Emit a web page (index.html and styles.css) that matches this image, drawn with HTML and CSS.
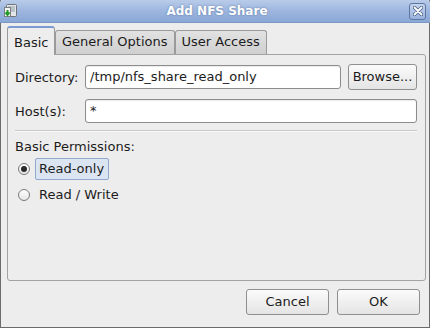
FILE: index.html
```html
<!DOCTYPE html>
<html lang="en">
<head>
    <meta charset="UTF-8">
    <title>Add NFS Share</title>
    <link rel="stylesheet" href="styles.css">
</head>
<body>
    <div class="window">
        <!-- Title bar -->
        <div class="titlebar">
            <svg class="app-icon" width="16" height="16" viewBox="0 0 16 16">
                <rect x="3.5" y="1.5" width="10" height="12" rx="1" fill="#e4e6e8" stroke="#6d7478"/>
                <rect x="5" y="3" width="7" height="6" fill="#b9c2c8"/>
                <rect x="1.5" y="4.5" width="6" height="9" fill="#f2f2f2" stroke="#7a7f83"/>
                <path d="M4.5 7 v4 M2.5 9.5 l2 2.5 l2 -2.5" stroke="#1f9a2a" stroke-width="2" fill="none"/>
            </svg>
            <div class="title">Add NFS Share</div>
            <div class="close-button">
                <svg width="10" height="10" viewBox="0 0 10 10">
                    <path d="M1.5 1.5 L8.5 8.5 M8.5 1.5 L1.5 8.5" stroke="#4a6286" stroke-width="3.4" stroke-linecap="round"/>
                    <path d="M1.5 1.5 L8.5 8.5 M8.5 1.5 L1.5 8.5" stroke="#ffffff" stroke-width="1.8" stroke-linecap="round"/>
                </svg>
            </div>
        </div>

        <div class="content">
            <!-- Tabs -->
            <div class="tabs">
                <div class="tab active">Basic</div>
                <div class="tab">General Options</div>
                <div class="tab">User Access</div>
            </div>

            <div class="panel">
                <div class="form-row">
                    <div class="label">Directory:</div>
                    <div class="input">/tmp/nfs_share_read_only</div>
                    <div class="button browse">Browse...</div>
                </div>
                <div class="form-row">
                    <div class="label">Host(s):</div>
                    <div class="input">*</div>
                </div>

                <div class="separator"></div>

                <div class="section-label">Basic Permissions:</div>
                <div class="radio-row">
                    <span class="radio checked"></span>
                    <span class="radio-text focused">Read-only</span>
                </div>
                <div class="radio-row">
                    <span class="radio"></span>
                    <span class="radio-text">Read / Write</span>
                </div>
            </div>

            <!-- Dialog buttons -->
            <div class="actions">
                <div class="button action">Cancel</div>
                <div class="button action">OK</div>
            </div>
        </div>
    </div>
</body>
</html>
```

FILE: styles.css
```css
* {
    box-sizing: border-box;
    margin: 0;
    padding: 0;
    font-family: 'DejaVu Sans', 'Liberation Sans', sans-serif;
}

body {
    background-color: #ffffff;
    width: 430px;
    height: 328px;
}

.window {
    width: 430px;
    height: 328px;
    background-color: #ededed;
    border-left: 1px solid #6b6b6b;
    border-right: 1px solid #6b6b6b;
    border-bottom: 1px solid #6b6b6b;
    display: flex;
    flex-direction: column;
}

.titlebar {
    height: 23px;
    background: linear-gradient(to bottom, #b9cbe8 0%, #9db6df 50%, #8aa7d6 100%);
    border-bottom: 1px solid #7b97c6;
    border-radius: 3px 3px 0 0;
    display: flex;
    align-items: center;
    padding: 0 4px 0 3px;
    margin: 0 -1px;
}

.app-icon {
    flex: 0 0 auto;
}

.title {
    flex: 1;
    text-align: center;
    font-size: 12px;
    font-weight: 700;
    color: #ffffff;
    text-shadow: 0 0 2px rgba(60, 85, 130, 0.7);
    padding-left: 6px;
}

.close-button {
    width: 17px;
    height: 17px;
    border: 1px solid #5d77a3;
    border-radius: 3px;
    background: linear-gradient(to bottom, #c6d5ee, #98b1dc);
    display: flex;
    justify-content: center;
    align-items: center;
}

.content {
    flex: 1;
    display: flex;
    flex-direction: column;
    padding: 3px 3px 0 6px;
}

.tabs {
    display: flex;
    align-items: flex-end;
    height: 29px;
    position: relative;
    z-index: 1;
    margin-bottom: -1px;
}

.tab {
    height: 24px;
    padding: 0 6px;
    font-size: 13px;
    color: #1c1c1c;
    line-height: 22px;
    border: 1px solid #9a9a9a;
    border-bottom: none;
    border-radius: 3px 3px 0 0;
    background: linear-gradient(to bottom, #e2e2e2, #cfcfcf);
    margin-bottom: 1px;
}

.tab.active {
    height: 29px;
    margin-bottom: 0;
    line-height: 30px;
    background: #ededed;
    border-top: 2px solid #7b9ad0;
    width: 48px;
}

.panel {
    height: 227px;
    border: 1px solid #a3a3a3;
    border-radius: 0 3px 3px 3px;
    padding: 9px 8px 0 7px;
    display: flex;
    flex-direction: column;
}

.form-row {
    display: flex;
    align-items: center;
    height: 26px;
    margin-bottom: 8px;
}

.label {
    width: 70px;
    font-size: 13px;
    color: #1c1c1c;
}

.input {
    flex: 1;
    height: 24px;
    background-color: #ffffff;
    border: 1px solid #8c8c8c;
    border-radius: 3px;
    box-shadow: inset 0 1px 1px rgba(0, 0, 0, 0.08);
    font-size: 13px;
    line-height: 22px;
    color: #1c1c1c;
    padding-left: 4px;
}

.button {
    height: 26px;
    border: 1px solid #8f8f8f;
    border-radius: 3px;
    background: linear-gradient(to bottom, #fbfbfb, #e4e4e4);
    font-size: 13px;
    color: #1c1c1c;
    line-height: 24px;
    text-align: center;
}

.browse {
    width: 69px;
    margin-left: 7px;
}

.separator {
    height: 2px;
    border-top: 1px solid #c8c8c8;
    border-bottom: 1px solid #fafafa;
    margin: -2px 0 6px 0;
}

.section-label {
    font-size: 13px;
    color: #1c1c1c;
    height: 18px;
    line-height: 18px;
}

.radio-row {
    display: flex;
    align-items: center;
    height: 26px;
    padding-left: 3px;
}

.radio {
    width: 12px;
    height: 12px;
    border: 1px solid #7a7a7a;
    border-radius: 50%;
    background: linear-gradient(to bottom, #ffffff, #e6e6e6);
    display: flex;
    justify-content: center;
    align-items: center;
}

.radio.checked::after {
    content: "";
    width: 6px;
    height: 6px;
    border-radius: 50%;
    background-color: #2a2a2a;
}

.radio-text {
    font-size: 13px;
    color: #1c1c1c;
    margin-left: 5px;
    padding: 2px 4px 3px 3px;
    border: 1px solid transparent;
}

.radio-text.focused {
    background-color: #dbe4f1;
    border: 1px solid #92a9cc;
    border-radius: 2px;
}

.actions {
    display: flex;
    justify-content: flex-end;
    gap: 8px;
    padding: 8px 6px 0 0;
}

.action {
    width: 83px;
    height: 26px;
}
```
